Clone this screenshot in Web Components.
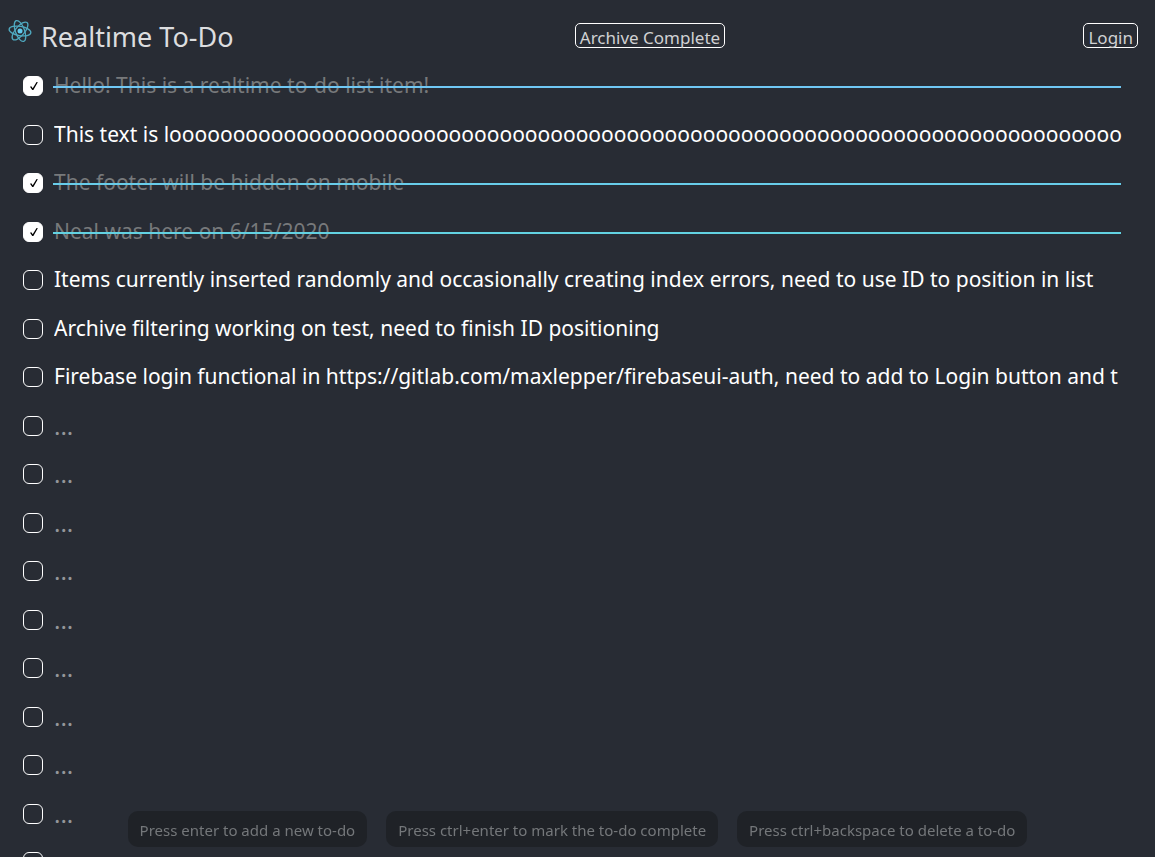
<!DOCTYPE html>
<html lang="en">
<head>
<meta charset="utf-8">
<meta name="viewport" content="width=device-width, initial-scale=1">
<title>Realtime To-Do</title>
<style>
  body {
    margin: 0;
    height: 100vh;
    overflow: hidden;
    background: #282c34;
    color: #fff;
    font-family: "Noto Sans", "Open Sans", sans-serif;
  }
</style>
</head>
<body>
<todo-app>
  <todo-header>
    Realtime To-Do
    <outline-button slot="action">Archive Complete</outline-button>
    <outline-button slot="account">Login</outline-button>
  </todo-header>
  <todo-list></todo-list>
  <hint-bar slot="footer">
    <hint-pill>Press enter to add a new to-do</hint-pill>
    <hint-pill>Press ctrl+enter to mark the to-do complete</hint-pill>
    <hint-pill>Press ctrl+backspace to delete a to-do</hint-pill>
  </hint-bar>
</todo-app>

<script>
class BaseElement extends HTMLElement {
  constructor() {
    super();
    this.attachShadow({ mode: 'open' }).innerHTML = this.constructor.markup;
  }
}

customElements.define('react-logo', class extends BaseElement {
  static markup = `
    <style>
      :host { display: block; }
      svg { display: block; width: 24px; height: 24px; }
    </style>
    <svg viewBox="-12 -12 24 24" fill="none" stroke="#4fa9c0" stroke-width="1.3" aria-hidden="true">
      <circle r="2.5" fill="#61c8ea" stroke="none"/>
      <ellipse rx="11" ry="4.6" transform="rotate(10)"/>
      <ellipse rx="11" ry="4.6" transform="rotate(70)"/>
      <ellipse rx="11" ry="4.6" transform="rotate(130)"/>
    </svg>`;
});

customElements.define('outline-button', class extends BaseElement {
  static markup = `
    <style>
      :host { display: block; }
      button {
        display: block;
        box-sizing: border-box;
        height: 25px;
        margin: 0;
        padding: 2px 4px 0;
        border: 1px solid #fff;
        border-radius: 5px;
        background: transparent;
        color: #d0d1d3;
        font: inherit;
        font-size: 17px;
        line-height: 24px;
        white-space: nowrap;
        cursor: pointer;
      }
    </style>
    <button type="button"><slot></slot></button>`;
});

customElements.define('todo-header', class extends BaseElement {
  static markup = `
    <style>
      :host { display: block; }
      header {
        display: flex;
        align-items: center;
        box-sizing: border-box;
        height: 62px;
        padding: 10px 17px 0 8px;
      }
      react-logo { align-self: flex-start; padding-top: 9px; }
      h1 {
        align-self: flex-start;
        margin: 0 0 0 9px;
        color: #dcdddf;
        font-size: 27px;
        font-weight: 400;
        line-height: 54px;
        white-space: nowrap;
      }
      .action { margin: 0 auto; }
      .account { margin-left: 17px; }
      .action, .account { padding-bottom: 1px; }
    </style>
    <header>
      <react-logo></react-logo>
      <h1><slot></slot></h1>
      <div class="action"><slot name="action"></slot></div>
      <div class="account"><slot name="account"></slot></div>
    </header>`;
});

customElements.define('todo-item', class extends BaseElement {
  static markup = `
    <style>
      :host { display: flex; align-items: center; padding: 10px 33px 10px 23px; }
      :host(:nth-child(even)) { padding-top: 11px; }
      .check {
        appearance: none;
        display: grid;
        place-items: center;
        flex: none;
        box-sizing: border-box;
        width: 20px;
        height: 20px;
        margin: 0;
        border: 1px solid #fff;
        border-radius: 6px;
        background: transparent;
      }
      .check:checked { background: #fff; padding-left: 2px; }
      .check:checked::before {
        content: "";
        width: 8px;
        height: 8px;
        background: #000;
        clip-path: polygon(0 60%, 16% 54%, 34% 78%, 82% 0, 98% 3%, 42% 100%, 28% 100%);
      }
      .field { position: relative; flex: 1; min-width: 0; margin-left: 10px; }
      .text {
        display: block;
        box-sizing: border-box;
        width: 100%;
        height: 28px;
        margin: 0;
        padding: 0 0 2px 1px;
        border: 0;
        outline: 0;
        background: transparent;
        color: #fff;
        font: inherit;
        font-size: 21px;
        line-height: 26px;
      }
      .text::placeholder { color: #94969a; opacity: 1; }
      .text:placeholder-shown { font-size: 24px; }
      :host([done]) .text { color: #77797b; }
      :host([done]) .field::after {
        content: "";
        position: absolute;
        left: 0;
        right: 1px;
        top: 14px;
        height: 2px;
        background: var(--strike, #6cc8f2);
      }
    </style>
    <input class="check" type="checkbox" aria-label="Complete">
    <div class="field"><input class="text" type="text" placeholder="..." aria-label="To-do" spellcheck="false"></div>`;
  connectedCallback() {
    const check = this.shadowRoot.querySelector('.check');
    check.checked = this.hasAttribute('done');
    check.addEventListener('change', () => this.toggleAttribute('done', check.checked));
    this.shadowRoot.querySelector('.text').value = this.getAttribute('text') || '';
  }
});

customElements.define('todo-list', class extends BaseElement {
  static markup = `
    <style>:host { display: block; }</style>
    <div id="rows"></div>`;
  connectedCallback() {
    const items = [
      { text: 'Hello! This is a realtime to-do list item!', strike: '#70c8f4' },
      { text: 'This text is l' + 'o'.repeat(78) },
      { text: 'The footer will be hidden on mobile', strike: '#68cdea' },
      { text: 'Neal was here on 6/15/2020', strike: '#62d2e2' },
      { text: 'Items currently inserted randomly and occasionally creating index errors, need to use ID to position in list' },
      { text: 'Archive filtering working on test, need to finish ID positioning' },
      { text: 'Firebase login functional in https://gitlab.com/maxlepper/firebaseui-auth, need to add to Login button and t' },
      ...Array.from({ length: 10 }, () => ({ text: '' })),
    ];
    const rows = this.shadowRoot.getElementById('rows');
    for (const item of items) {
      const row = document.createElement('todo-item');
      row.setAttribute('text', item.text);
      if (item.strike) {
        row.setAttribute('done', '');
        row.style.setProperty('--strike', item.strike);
      }
      rows.append(row);
    }
  }
});

customElements.define('hint-pill', class extends BaseElement {
  static markup = `
    <style>
      :host {
        display: block;
        padding: 7px 12px 5px;
        border-radius: 10px;
        background: #1f2227;
        color: #74777a;
        font-size: 15px;
        line-height: 24px;
        white-space: nowrap;
      }
    </style>
    <slot></slot>`;
});

customElements.define('hint-bar', class extends BaseElement {
  static markup = `
    <style>
      :host { display: flex; justify-content: center; gap: 19px; }
      @media (max-width: 700px) { :host { display: none; } }
    </style>
    <slot></slot>`;
});

customElements.define('todo-app', class extends BaseElement {
  static markup = `
    <style>
      :host { display: block; }
      footer { position: fixed; left: 0; right: 0; bottom: 10px; pointer-events: none; }
    </style>
    <slot></slot>
    <footer><slot name="footer"></slot></footer>`;
});
</script>
</body>
</html>
